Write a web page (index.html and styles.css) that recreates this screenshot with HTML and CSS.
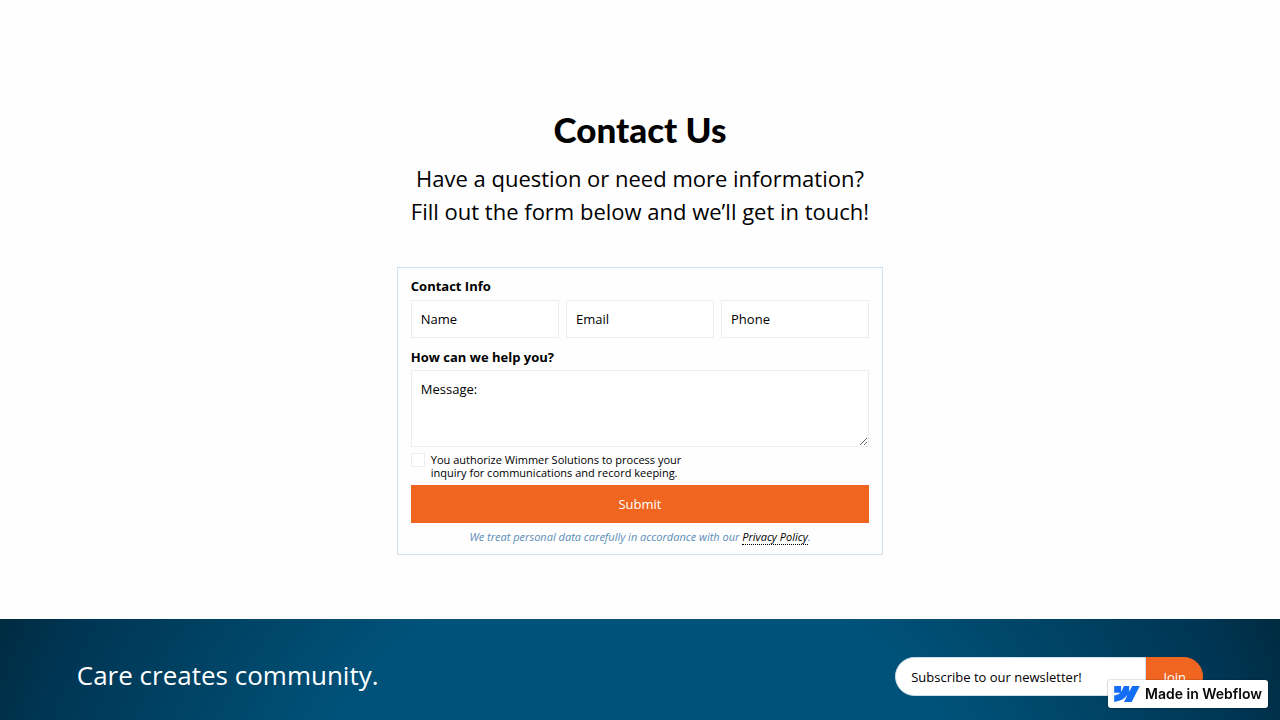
FILE: index.html
```html
<!DOCTYPE html>
<html lang="en">
<head>
<meta charset="utf-8">
<meta name="viewport" content="width=device-width, initial-scale=1">
<title>Contact Us</title>
<link rel="stylesheet" href="styles.css">
</head>
<body>
<main class="contact">
  <h1 class="contact-title">Contact Us</h1>
  <p class="contact-intro">Have a question or need more information?<br>Fill out the form below and we’ll get in touch!</p>
  <form class="contact-form">
    <fieldset class="group">
      <legend class="group-label">Contact Info</legend>
      <div class="fields">
        <input class="field" type="text" placeholder="Name" aria-label="Name">
        <input class="field" type="email" placeholder="Email" aria-label="Email">
        <input class="field" type="tel" placeholder="Phone" aria-label="Phone">
      </div>
    </fieldset>
    <div class="group message-group">
      <label class="group-label" for="message">How can we help you?</label>
      <textarea class="field message" id="message" placeholder="Message:"></textarea>
    </div>
    <label class="consent">
      <input class="consent-box" type="checkbox">
      <span>You authorize Wimmer Solutions to process your<br>inquiry for communications and record keeping.</span>
    </label>
    <button class="submit" type="submit">Submit</button>
    <p class="privacy">We treat personal data carefully in accordance with our <a class="privacy-link" href="#">Privacy Policy</a>.</p>
  </form>
</main>
<footer class="footer">
  <p class="tagline">Care creates community.</p>
  <form class="newsletter">
    <input class="newsletter-input" type="email" placeholder="Subscribe to our newsletter!" aria-label="Subscribe to our newsletter!">
    <button class="newsletter-join" type="submit">Join</button>
  </form>
</footer>
<a class="badge" href="#">
  <svg class="badge-logo" viewBox="0 4.5 24 15" aria-hidden="true"><path fill="#146ef5" d="M24 4.515L16.343 19.485H9.149L12.355 13.279H12.211C9.567 16.713 5.62 18.973 0 19.485V13.365S3.596 13.152 5.71 10.93H0V4.515H6.417V9.792L6.561 9.791L9.183 4.515H14.036V9.759L14.18 9.758L16.9 4.515Z"/></svg>
  <span>Made in Webflow</span>
</a>
</body>
</html>
```
FILE: styles.css
```css
* { box-sizing: border-box; }

body {
  margin: 0;
  background: #fefefe;
  color: #000;
  font-family: "Open Sans", "Noto Sans", sans-serif;
  font-size: 13px;
}

input, textarea, button { font: inherit; color: inherit; }

input::placeholder, textarea::placeholder { color: #000; opacity: 1; }

.contact {
  display: flex;
  flex-direction: column;
  align-items: center;
  padding: 108px 0 64px;
}

.contact-title {
  margin: 0;
  font-family: Lato, sans-serif;
  font-size: 35px;
  font-weight: 900;
  line-height: 42px;
}

.contact-intro {
  margin: 12px 0 39px;
  font-size: 22px;
  line-height: 33px;
  text-align: center;
}

.contact-form {
  width: 38%;
  min-width: 320px;
  padding: 9px 13px;
  border: 1px solid #cfe0ec;
}

.group {
  display: flex;
  flex-direction: column;
  gap: 4px;
  margin: 0;
  padding: 0;
  border: 0;
  min-width: 0;
}

.group-label {
  padding: 0;
  font-weight: 700;
  line-height: 18px;
}

.fields {
  display: grid;
  grid-template-columns: repeat(3, 1fr);
  gap: 7px;
  margin-top: 5px;
}

.field {
  width: 100%;
  min-width: 0;
  height: 38px;
  padding: 8px 9px;
  border: 1px solid #e9f0f5;
  border-radius: 0;
  background: #fff;
}

.message-group { margin-top: 10px; }

.message {
  display: block;
  height: 77px;
  line-height: 20px;
  resize: vertical;
}

.consent {
  display: flex;
  gap: 6px;
  margin: 6px 0;
  font-size: 11px;
  line-height: 13px;
}

.consent-box {
  appearance: none;
  flex: none;
  width: 14px;
  height: 14px;
  margin: 0;
  border: 1px solid #e9f0f5;
  background: #fff;
}

.submit {
  display: block;
  width: 100%;
  height: 38px;
  border: 0;
  background: #f0651f;
  color: #fff;
}

.privacy {
  margin: 6px 0 0;
  color: #5b8db8;
  font-size: 11px;
  font-style: italic;
  line-height: 16px;
  text-align: center;
}

.privacy-link {
  border-bottom: 1px dotted #000;
  color: #000;
  text-decoration: none;
}

.footer {
  display: flex;
  align-items: flex-start;
  justify-content: space-between;
  padding: 38px 6% 24px;
  background: radial-gradient(circle at 50% 300px, #00527a 360px, #004060 532px, #003655 626px, #002b40 707px);
}

.tagline {
  margin: 0;
  color: #fff;
  font-size: 26px;
  line-height: 36px;
}

.newsletter {
  display: flex;
  width: 308px;
  height: 39px;
}

.newsletter-input {
  flex: 1;
  min-width: 0;
  padding: 0 15px;
  border: 1px solid #cfe0ec;
  border-radius: 20px 0 0 20px;
  background: #fff;
}

.newsletter-join {
  width: 57px;
  padding: 0;
  border: 0;
  border-radius: 0 20px 20px 0;
  background: #f0651f;
  color: #fff;
}

.badge {
  position: fixed;
  right: 12px;
  bottom: 12px;
  display: flex;
  align-items: center;
  gap: 5px;
  padding: 6px;
  border-radius: 3px;
  background: #fff;
  box-shadow: 0 0 0 1px rgba(0, 0, 0, 0.1), 0 1px 3px rgba(0, 0, 0, 0.1);
  color: #080808;
  font-family: Inter, sans-serif;
  font-size: 14px;
  font-weight: 600;
  line-height: 16px;
  text-decoration: none;
}

.badge-logo { width: 26px; height: 16px; }
```
